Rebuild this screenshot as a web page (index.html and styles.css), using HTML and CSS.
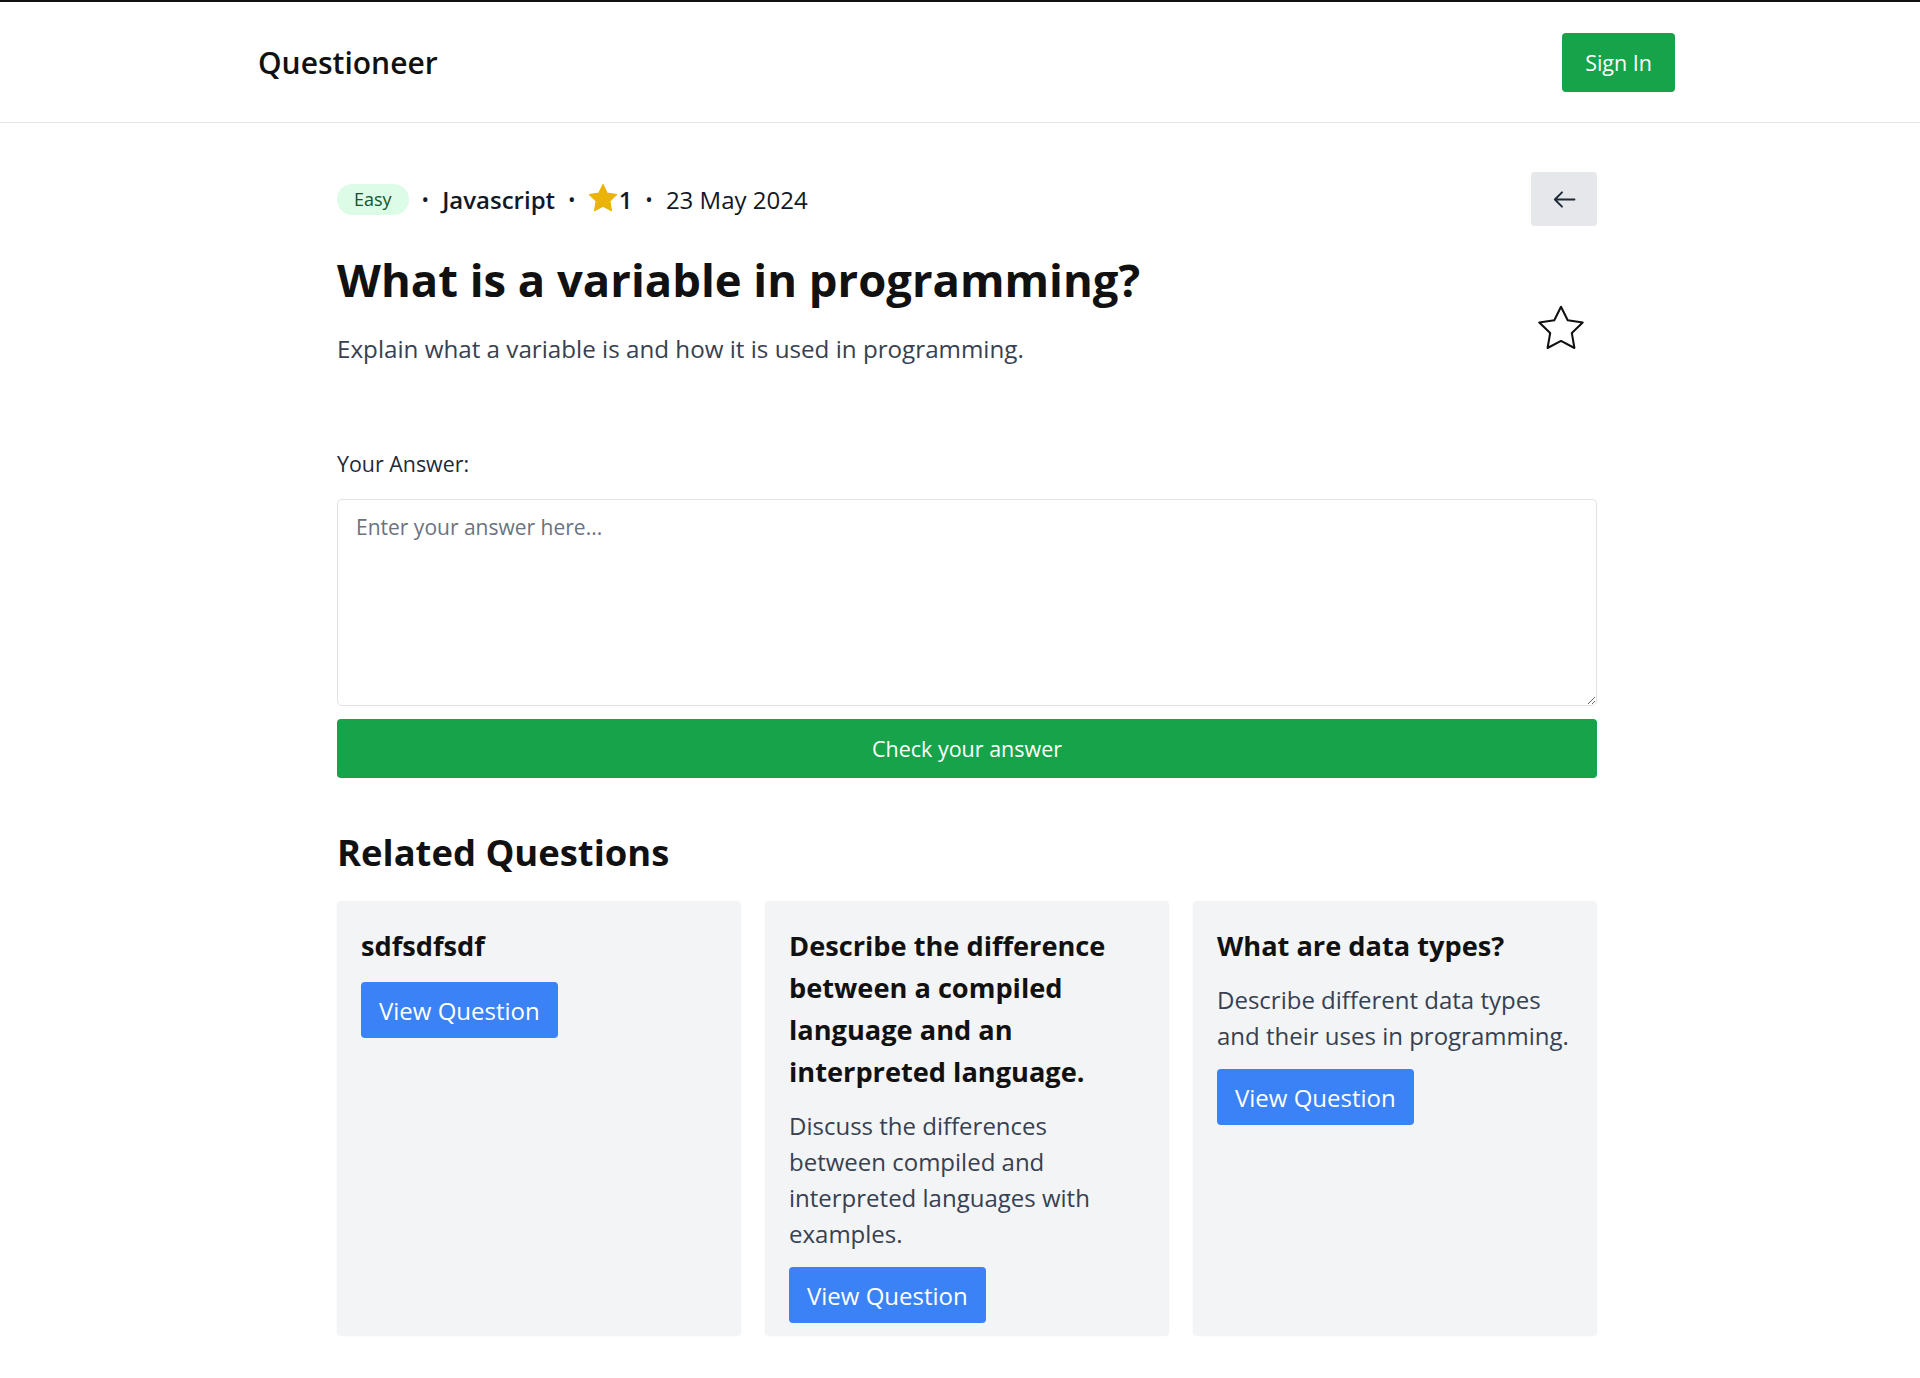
FILE: index.html
```html
<!DOCTYPE html>
<html lang="en">
<head>
<meta charset="utf-8">
<title>Questioneer</title>
<link rel="stylesheet" href="styles.css">
</head>
<body>
<header class="site-header">
  <div class="brand">Questioneer</div>
  <button class="signin">Sign In</button>
</header>
<main class="main">
  <div class="meta-row">
    <div class="meta">
      <span class="badge">Easy</span>
      <span class="dot">•</span>
      <span class="lang">Javascript</span>
      <span class="dot">•</span>
      <span class="stars">
        <svg class="star-fill" width="28" height="28" viewBox="1.8 1.6 20.4 20.4"><polygon points="12,2 15.09,8.26 22,9.27 17,14.14 18.18,21.02 12,17.77 5.82,21.02 7,14.14 2,9.27 8.91,8.26" fill="#eab308" stroke="#eab308" stroke-width="0.8" stroke-linejoin="round"/></svg>
        <span class="count">1</span>
      </span>
      <span class="dot">•</span>
      <span class="date">23 May 2024</span>
    </div>
    <button class="back" aria-label="Back">
      <svg width="23" height="19" viewBox="0 0 22 18"><path d="M20.5 9H1.8M8.6 2.2L1.8 9l6.8 6.8" fill="none" stroke="#1f2937" stroke-width="1.9" stroke-linecap="round" stroke-linejoin="round"/></svg>
    </button>
  </div>
  <div class="q-head">
    <div class="q-text">
      <h1 class="q-title">What is a variable in programming?</h1>
      <p class="q-desc">Explain what a variable is and how it is used in programming.</p>
    </div>
    <button class="fav" aria-label="Favourite">
      <svg width="46" height="46" viewBox="1.4 1.2 21.2 21.2"><polygon points="12,2 15.09,8.26 22,9.27 17,14.14 18.18,21.02 12,17.77 5.82,21.02 7,14.14 2,9.27 8.91,8.26" fill="none" stroke="#111" stroke-width="0.95" stroke-linejoin="round"/></svg>
    </button>
  </div>
  <label class="answer-label" for="answer">Your Answer:</label>
  <textarea id="answer" class="answer" placeholder="Enter your answer here..."></textarea>
  <button class="check">Check your answer</button>
  <h2 class="related-title">Related Questions</h2>
  <div class="cards">
    <div class="card">
      <h3 class="card-title">sdfsdfsdf</h3>
      <div><button class="view">View Question</button></div>
    </div>
    <div class="card">
      <h3 class="card-title">Describe the difference between a compiled language and an interpreted language.</h3>
      <p class="card-desc">Discuss the differences between compiled and interpreted languages with examples.</p>
      <div><button class="view">View Question</button></div>
    </div>
    <div class="card">
      <h3 class="card-title">What are data types?</h3>
      <p class="card-desc">Describe different data types and their uses in programming.</p>
      <div><button class="view">View Question</button></div>
    </div>
  </div>
</main>
</body>
</html>
```
FILE: styles.css
```css
* { box-sizing: border-box; }
html, body { margin: 0; padding: 0; }
body {
  font-family: "Open Sans", "Noto Sans", sans-serif;
  color: #111827;
  background: #fff;
  border-top: 2px solid #111;
}
button { font-family: inherit; cursor: pointer; }

.site-header {
  height: 121px;
  border-bottom: 1px solid #e5e7eb;
  display: flex;
  align-items: center;
  justify-content: space-between;
  padding: 0 245px 0 258px;
}
.brand {
  font-size: 30px;
  font-weight: 600;
  color: #111;
}
.signin {
  height: 59px;
  padding: 0 23px;
  border: none;
  border-radius: 4px;
  background: #16a34a;
  color: #fff;
  font-size: 21.5px;
  font-weight: 500;
}

.main {
  width: 1260px;
  margin-left: 337px;
  padding-top: 49px;
  padding-bottom: 43px;
}
.meta-row {
  display: flex;
  align-items: center;
  justify-content: space-between;
  height: 54px;
}
.meta {
  display: flex;
  align-items: center;
  gap: 13px;
  font-size: 24px;
  color: #111827;
}
.badge {
  font-size: 18px;
  line-height: 31px;
  padding: 0 17px;
  border-radius: 999px;
  background: #dcfce7;
  color: #14532d;
}
.dot { font-size: 20px; }
.lang { font-weight: 600; }
.stars { display: flex; align-items: center; gap: 2px; }
.star-fill { display: block; margin-top: -3px; }
.count { font-weight: 600; }
.back {
  width: 66px;
  height: 54px;
  border: none;
  border-radius: 4px;
  background: #e5e7eb;
  display: flex;
  align-items: center;
  justify-content: center;
  padding: 0;
}
.back svg { display: block; }

.q-head {
  display: flex;
  justify-content: space-between;
  align-items: flex-start;
}
.q-title {
  margin: 29px 0 0;
  font-size: 45.4px;
  line-height: 48px;
  font-weight: 700;
  color: #111;
}
.q-desc {
  margin: 28px 0 0;
  font-size: 24.2px;
  line-height: 36px;
  color: #374151;
}
.fav {
  margin-top: 79px;
  margin-right: 13px;
  padding: 0;
  border: none;
  background: none;
}
.fav svg { display: block; }

.answer-label {
  display: block;
  margin-top: 82px;
  font-size: 21.4px;
  line-height: 30px;
  font-weight: 500;
  color: #1f2937;
}
.answer {
  display: block;
  width: 100%;
  height: 207px;
  margin-top: 20px;
  padding: 12px 18px;
  border: 1px solid #dfe2e6;
  border-radius: 5px;
  font-family: inherit;
  font-size: 21px;
  line-height: 30px;
  color: #111;
}
.answer::placeholder { color: #6b7280; }
.check {
  display: block;
  width: 100%;
  height: 59px;
  margin-top: 13px;
  border: none;
  border-radius: 4px;
  background: #16a34a;
  color: #fff;
  font-size: 21.5px;
  font-weight: 500;
}

.related-title {
  margin: 54px 0 0;
  font-size: 36.4px;
  line-height: 40px;
  font-weight: 700;
  color: #111;
}
.cards {
  margin-top: 29px;
  display: grid;
  grid-template-columns: repeat(3, 1fr);
  gap: 24px;
}
.card {
  background: #f3f4f6;
  border-radius: 4px;
  box-shadow: 0 1px 2px rgba(0,0,0,0.06);
  padding: 24px 24px 12px;
  display: flex;
  flex-direction: column;
  gap: 15px;
}
.card-title {
  margin: 0;
  font-size: 27.2px;
  line-height: 42px;
  font-weight: 700;
  color: #111;
}
.card-desc {
  margin: 0;
  font-size: 24px;
  line-height: 36px;
  color: #374151;
}
.view {
  height: 56px;
  padding: 0 18px;
  border: none;
  border-radius: 4px;
  background: #3b82f6;
  color: #fff;
  font-size: 24px;
}
```
